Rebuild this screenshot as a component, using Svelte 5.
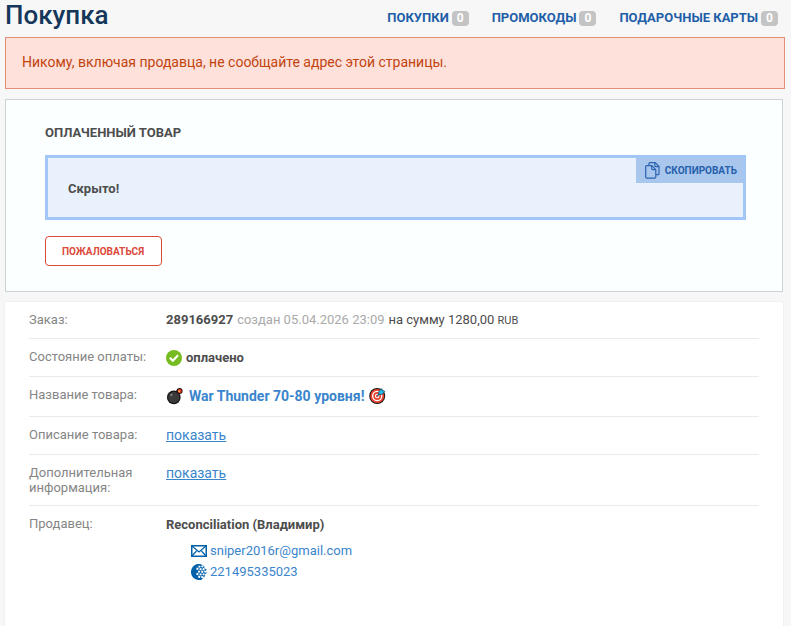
<script>
  const tabs = [
    { title: 'ПОКУПКИ', count: 0 },
    { title: 'ПРОМОКОДЫ', count: 0 },
    { title: 'ПОДАРОЧНЫЕ КАРТЫ', count: 0 }
  ];
  const holes = [
    [8.4, 2.6], [11.4, 2.4], [6.4, 4.8], [9.6, 5.2], [12.6, 5.2], [8, 7.6], [11.2, 7.8],
    [14.2, 7.6], [6.4, 10], [9.6, 10.4], [12.6, 10.4], [8.2, 12.8], [11.2, 13]
  ];
</script>

<div class="page">
  <header>
    <h1>Покупка</h1>
    <nav>
      {#each tabs as tab}
        <a href="#top">{tab.title} <span class="count">{tab.count}</span></a>
      {/each}
    </nav>
  </header>

  <p class="notice">Никому, включая продавца, не сообщайте адрес этой страницы.</p>

  <section class="goods">
    <h2>ОПЛАЧЕННЫЙ ТОВАР</h2>
    <div class="secret">
      <span>Скрыто!</span>
      <button class="copy" type="button">
        <svg width="15" height="17" viewBox="0 0 15 17" fill="none" stroke="#2a62b0" stroke-width="1.2" stroke-linejoin="round" aria-hidden="true">
          <path d="M4 3.500V1.700q0-1 1-1h5.200l3.800 3.800v7.200q0 1-1 1h-1.800" />
          <path d="M9.800 .8v2.800q0 1 1 1h3" />
          <path d="M1.700 3.600h5.100l4 4v7.400q0 1.200-1.200 1.200h-7.800Q.7 16.200.7 15V4.700q0-1.100 1-1.100z" />
          <path d="M6.700 3.800v2.800q0 1 1 1h3" />
        </svg>
        СКОПИРОВАТЬ
      </button>
    </div>
    <button class="complain" type="button">ПОЖАЛОВАТЬСЯ</button>
  </section>

  <main>
    <dl>
      <div class="row">
        <dt>Заказ:</dt>
        <dd class="order">
          <b>289166927</b>
          <span class="date">создан 05.04.2026 23:09</span>
          <span>на сумму 1280,00 <small>RUB</small></span>
        </dd>
      </div>
      <div class="row">
        <dt>Состояние оплаты:</dt>
        <dd class="paid">
          <svg width="16" height="16" viewBox="0 0 16 16" aria-hidden="true">
            <circle cx="8" cy="8" r="8" fill="#76bc21" />
            <path d="M3.800 7.800l3 2.900 5.300-5.400" fill="none" stroke="#fff" stroke-width="2.200" />
          </svg>
          <b>оплачено</b>
        </dd>
      </div>
      <div class="row tall">
        <dt>Название товара:</dt>
        <dd class="product">
          <svg width="18" height="18" viewBox="0 0 18 18" aria-hidden="true">
            <path d="M10.500 6.500l2.500-3" stroke="#222" stroke-width="4" />
            <circle cx="7.800" cy="10.400" r="6.800" fill="#151515" />
            <circle cx="7.800" cy="10.400" r="5.600" fill="#3a3a3a" />
            <ellipse cx="5.400" cy="8" rx="1.300" ry=".9" fill="#8a8a8a" transform="rotate(-40 5.400 8)" />
            <circle cx="13.600" cy="4" r="3" fill="#241512" />
            <circle cx="13.700" cy="3.900" r="2" fill="#e93a24" />
            <circle cx="13.100" cy="4.300" r=".9" fill="#ffc83d" />
          </svg>
          <a href="#product">War Thunder 70-80 уровня!</a>
          <svg width="18" height="18" viewBox="0 0 18 18" aria-hidden="true">
            <circle cx="8.200" cy="9" r="8" fill="#151515" />
            <circle cx="8.200" cy="9" r="7" fill="#e8412c" />
            <circle cx="8.200" cy="9" r="5.200" fill="#fff" />
            <circle cx="8.200" cy="9" r="3.900" fill="#e8412c" />
            <circle cx="8.200" cy="9" r="2.300" fill="#fff" />
            <circle cx="8.200" cy="9" r="1.200" fill="#e8412c" />
            <path d="M8.200 9l4-4" stroke="#176b91" stroke-width="1.200" />
            <path d="M9.800 7.500V4.600L12.700 1.600l.8 2 2.400.8-3 3.100z" fill="#29b6e8" stroke="#14465c" stroke-width=".7" />
          </svg>
        </dd>
      </div>
      <div class="row">
        <dt>Описание товара:</dt>
        <dd><a class="show" href="#description">показать</a></dd>
      </div>
      <div class="row">
        <dt>Дополнительная информация:</dt>
        <dd><a class="show" href="#info">показать</a></dd>
      </div>
      <div class="row">
        <dt>Продавец:</dt>
        <dd>
          <b>Reconciliation (Владимир)</b>
          <div class="contacts">
            <a href="#mail">
              <svg width="16" height="12" viewBox="0 0 16 12" fill="none" stroke="#0060aa" aria-hidden="true">
                <rect x=".75" y=".75" width="14.500" height="10.500" stroke-width="1.500" />
                <path d="M1 1l7 6 7-6M1 11l4.500-5M15 11l-4.500-5" stroke-width="1.200" />
              </svg>
              sniper2016r@gmail.com
            </a>
            <a href="#wmid">
              <svg width="16" height="16" viewBox="0 0 16 16" fill="#0060aa" aria-hidden="true">
                <path d="M10.500 .4A8 8 0 1 0 11 15.400L12.500 13 14.200 12.200 14 10.300 15.800 9 14.800 7.300 15.600 5.200 13.400 4.400 13.300 2.200z" />
                {#each holes as [x, y]}
                  <rect x={x - 1} y={y - 1} width="2" height="2" fill="#fff" transform="rotate(15 {x} {y})" />
                {/each}
              </svg>
              221495335023
            </a>
          </div>
        </dd>
      </div>
    </dl>
  </main>
</div>

<style>
  :global(body) {
    margin: 0;
    background: #f7f7f7;
  }
  .page {
    box-sizing: border-box;
    min-height: 100vh;
    display: flex;
    flex-direction: column;
    padding: 0 6px 0 5px;
    font: 13px/15px Roboto, "Liberation Sans", sans-serif;
    color: #4d4d4d;
  }
  header {
    display: flex;
    justify-content: space-between;
    align-items: flex-start;
    height: 37px;
  }
  h1 {
    margin: 0;
    font-size: 26px;
    line-height: 30px;
    font-weight: 500;
    color: #14375a;
  }
  nav {
    display: flex;
    gap: 23px;
    padding: 10px 7px 0 0;
  }
  nav a {
    display: flex;
    align-items: center;
    gap: 3px;
    font-weight: 700;
    line-height: 16px;
    color: #1f5fa8;
    text-decoration: none;
  }
  .count {
    padding: 0 5px;
    border-radius: 4px;
    background: #c4c4c4;
    color: #fff;
    font-size: 12px;
    line-height: 15px;
  }
  .notice {
    margin: 0 0 10px;
    padding: 14px 16px 16px;
    border: 1px solid #e48d77;
    background: #ffe1db;
    color: #c1440e;
    font-size: 14px;
    line-height: 20px;
  }
  .goods {
    margin: 0 2px 10px 0;
    padding: 25px 36px 25px 39px;
    border: 1px solid #cbd3d4;
    background: #fbffff;
  }
  h2 {
    margin: 0 0 15px;
    font-size: 13px;
    line-height: 15px;
    font-weight: 700;
  }
  .secret {
    display: flex;
    justify-content: space-between;
    align-items: flex-start;
    height: 59px;
    margin-bottom: 16px;
    border: 3px solid #a2c7f7;
    background: #e8f1fc;
    font-weight: 700;
  }
  .secret span {
    padding: 23px 20px 0;
  }
  button {
    font-family: inherit;
    font-weight: 700;
  }
  .copy {
    display: flex;
    align-items: center;
    gap: 5px;
    height: 25px;
    padding: 0 6px 0 9px;
    border: 0;
    background: #a9c6ed;
    color: #2460ab;
    font-size: 10px;
  }
  .complain {
    display: block;
    height: 30px;
    padding: 0 17px 0 16px;
    border: 1px solid #dc4a3b;
    border-radius: 4px;
    background: #fff;
    color: #dc4a3b;
    font-size: 10px;
  }
  main {
    flex: 1;
    margin-right: 2px;
    padding: 0 24px;
    background: #fff;
    box-shadow: 0 0 1px #d5d5d5;
  }
  dl {
    margin: 0;
  }
  .row {
    display: flex;
    padding: 10px 0;
    border-bottom: 1px solid #e8eaed;
  }
  .row:first-child {
    padding-bottom: 9px;
  }
  .row.tall {
    padding-bottom: 11px;
  }
  .row:last-child {
    border: 0;
  }
  dt {
    flex: 0 0 137px;
    color: #858585;
  }
  dd {
    flex: 1;
    margin: 0;
    line-height: 17px;
  }
  a {
    color: #3a85cc;
    text-decoration: none;
  }
  dd.order {
    display: flex;
    gap: 4px;
    line-height: 16px;
  }
  .date {
    color: #aaa;
  }
  small {
    font-size: 11px;
  }
  .paid,
  .product {
    display: flex;
    align-items: center;
    gap: 4px;
  }
  .product {
    gap: 5px;
    font-size: 14px;
    font-weight: 700;
  }
  .show {
    display: inline-block;
    vertical-align: top;
    font-size: 14px;
    text-decoration: underline;
  }
  .contacts {
    display: grid;
    justify-items: start;
    gap: 4px;
    padding: 9px 0 0 25px;
  }
  .contacts a {
    display: flex;
    align-items: center;
    gap: 3px;
  }
</style>
